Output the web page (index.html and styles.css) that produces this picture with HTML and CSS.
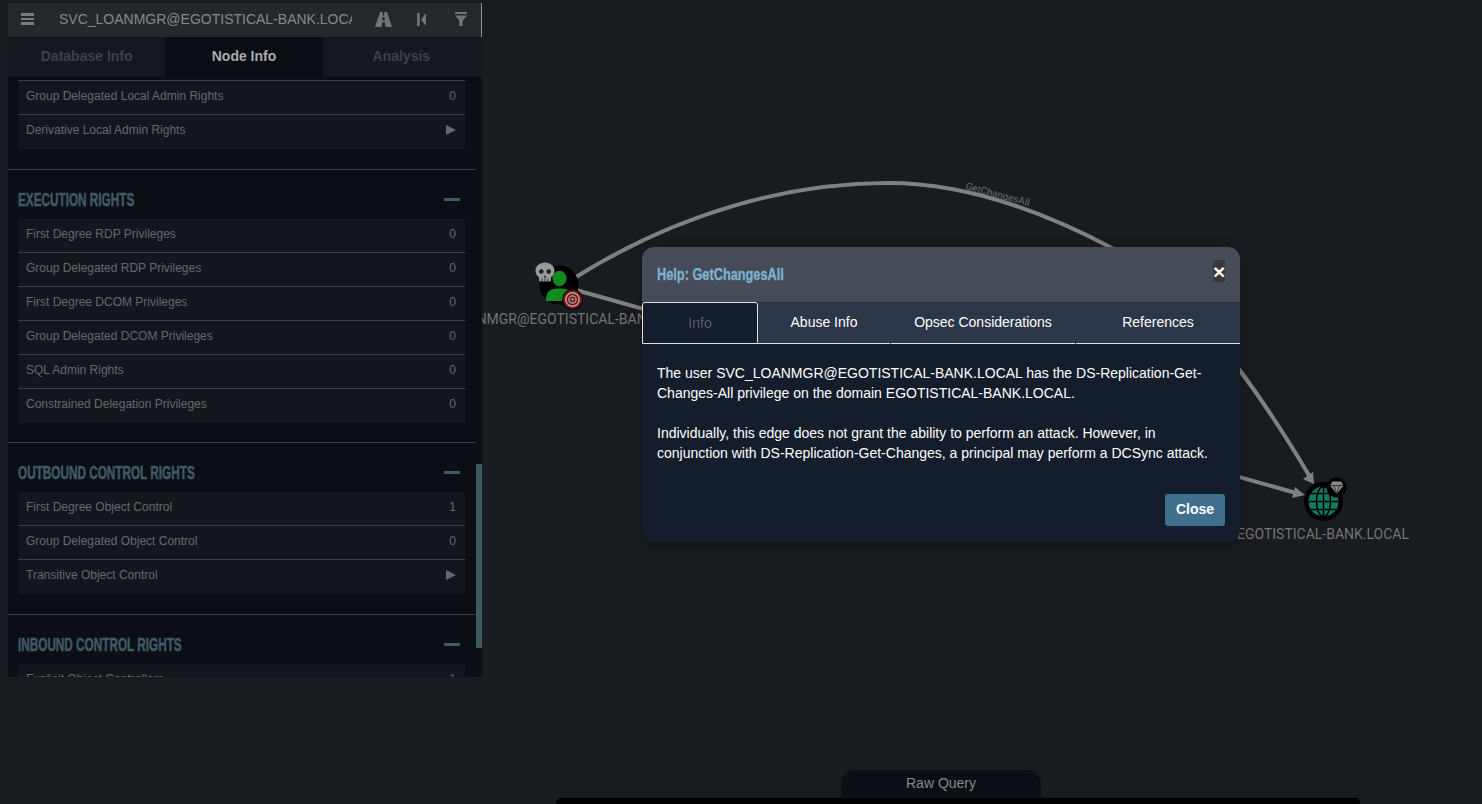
FILE: index.html
```html
<!DOCTYPE html>
<html lang="en">
<head>
<meta charset="utf-8">
<title>BloodHound</title>
<link rel="stylesheet" href="styles.css">
</head>
<body>
<svg class="graph" width="1482" height="804" viewBox="0 0 1482 804">
  <path class="edge" d="M576 277 C 680 212 790 183 888 183 C 965 183 1040 210 1110 247 C 1180 284 1250 375 1310 477"/>
  <path class="edge" d="M576 290 L 1296 493"/>
  <polygon class="arrow" points="1314,484 1303,479 1313,472"/>
  <polygon class="arrow" points="1305,495 1292,498 1295,487"/>
  <text class="edge-label" transform="translate(965 189) rotate(15)">GetChangesAll</text>

  <text class="node-label" x="560" y="324">SVC_LOANMGR@EGOTISTICAL-BANK.LOCAL</text>
  <text class="node-label" x="1323" y="539">EGOTISTICAL-BANK.LOCAL</text>

  <circle cx="559" cy="285" r="19.5" fill="#000"/>
  <ellipse cx="559.500" cy="278.500" rx="7" ry="7.800" fill="#128a1e"/>
  <path d="M546 301 v-3 a9.500 9.500 0 0 1 9.500 -9.500 h8 a9.500 9.500 0 0 1 9.500 9.500 v3 z" fill="#128a1e"/>
  <circle cx="572.500" cy="299.500" r="10.500" fill="#000"/>
  <circle cx="572.500" cy="299.500" r="9.500" fill="#7d0f12"/>
  <circle cx="572.500" cy="299.500" r="6.700" fill="none" stroke="#a8a8a8" stroke-width="1.500"/>
  <circle cx="572.500" cy="299.500" r="3.600" fill="none" stroke="#a8a8a8" stroke-width="1.300"/>
  <circle cx="572.500" cy="299.500" r="1.200" fill="#a8a8a8"/>
  <path d="M545 262.500 c-5.500 0 -9.500 3.600 -9.500 8.300 c0 2.800 1.300 5 3.500 6.400 v3.300 a1 1 0 0 0 1 1 h10 a1 1 0 0 0 1 -1 v-3.300 c2.200 -1.400 3.500 -3.600 3.500 -6.400 c0 -4.700 -4 -8.300 -9.500 -8.300 z" fill="#9a9a9a"/>
  <circle cx="541.300" cy="271.500" r="2.300" fill="#181b20"/>
  <circle cx="548.700" cy="271.500" r="2.300" fill="#181b20"/>
  <path d="M545 275 l1.300 2.500 h-2.600 z" fill="#181b20"/>
  <path d="M542 278.500 v3 M545 278.500 v3 M548 278.500 v3" stroke="#181b20" stroke-width="0.800"/>

  <circle cx="1323.500" cy="501.500" r="19.500" fill="#000"/>
  <circle cx="1323.500" cy="501.500" r="15" fill="#0f7a60"/>
  <g fill="none" stroke="#000" stroke-width="1.500">
    <ellipse cx="1323.500" cy="501.500" rx="7" ry="15"/>
    <path d="M1308.500 501.500 h30 M1311 493.500 h25 M1311 509.500 h25 M1323.500 486.500 v30"/>
  </g>
  <circle cx="1336.500" cy="487.500" r="10" fill="#000"/>
  <path d="M1332.500 481.500 h8.500 l2.500 4 l-6.700 8.500 l-6.800 -8.500 z" fill="#8a8a8a"/>
  <path d="M1330 485.500 h13.500 M1334 485.500 l2.700 8 l2.700 -8" fill="none" stroke="#000" stroke-width="0.600"/>
</svg>

<aside class="panel">
  <div class="topbar">
    <span class="hamburger"><i></i><i></i><i></i></span>
    <span class="search">SVC_LOANMGR@EGOTISTICAL-BANK.LOCAL</span>
    <svg class="tool road" viewBox="0 0 17 15" width="17" height="15"><path fill-rule="evenodd" d="M5 0 h2.800 v3.500 h1.400 v-3.500 H12 L17 15 H10.500 L10 10.500 H7 L6.500 15 H0 z M7.500 5 L7.200 8.500 h2.600 L9.500 5 z"/></svg>
    <svg class="tool back" viewBox="0 0 9 13" width="9" height="13"><path d="M0 0 h2.700 v13 H0 z M9 0 v13 L4 6.500 z"/></svg>
    <svg class="tool filter" viewBox="0 0 12 14" width="12" height="14"><path d="M0 0 h12 v2 H0 z M0 3.500 h12 L7.700 8.500 V14 H4.300 V8.500 z"/></svg>
  </div>
  <nav class="tabs">
    <span class="tab">Database Info</span>
    <span class="tab tab-active">Node Info</span>
    <span class="tab">Analysis</span>
  </nav>
  <div class="scroll">
    <div class="bar"></div>
    <div class="content">
      <section class="section first">
        <div class="rows">
          <div class="row"><span>Group Delegated Local Admin Rights</span><span>0</span></div>
          <div class="row"><span>Derivative Local Admin Rights</span><span class="play"></span></div>
        </div>
      </section>
      <section class="section tight">
        <header class="heading"><h2>EXECUTION RIGHTS</h2><span class="minus"></span></header>
        <div class="rows">
          <div class="row"><span>First Degree RDP Privileges</span><span>0</span></div>
          <div class="row"><span>Group Delegated RDP Privileges</span><span>0</span></div>
          <div class="row"><span>First Degree DCOM Privileges</span><span>0</span></div>
          <div class="row"><span>Group Delegated DCOM Privileges</span><span>0</span></div>
          <div class="row"><span>SQL Admin Rights</span><span>0</span></div>
          <div class="row"><span>Constrained Delegation Privileges</span><span>0</span></div>
        </div>
      </section>
      <section class="section">
        <header class="heading"><h2>OUTBOUND CONTROL RIGHTS</h2><span class="minus"></span></header>
        <div class="rows">
          <div class="row"><span>First Degree Object Control</span><span>1</span></div>
          <div class="row"><span>Group Delegated Object Control</span><span>0</span></div>
          <div class="row"><span>Transitive Object Control</span><span class="play"></span></div>
        </div>
      </section>
      <section class="section">
        <header class="heading"><h2>INBOUND CONTROL RIGHTS</h2><span class="minus"></span></header>
        <div class="rows">
          <div class="row"><span>Explicit Object Controllers</span><span>1</span></div>
        </div>
      </section>
    </div>
  </div>
</aside>

<div class="modal" role="dialog">
  <header class="modal-head">
    <h1>Help: GetChangesAll</h1>
    <button class="x">×</button>
  </header>
  <div class="modal-tabs">
    <span class="mtab mtab-active">Info</span>
    <span class="mtab">Abuse Info</span>
    <span class="mtab">Opsec Considerations</span>
    <span class="mtab">References</span>
  </div>
  <div class="modal-body">
    <p>The user SVC_LOANMGR@EGOTISTICAL-BANK.LOCAL has the DS-Replication-Get-Changes-All privilege on the domain EGOTISTICAL-BANK.LOCAL.</p>
    <p>Individually, this edge does not grant the ability to perform an attack. However, in conjunction with DS-Replication-Get-Changes, a principal may perform a DCSync attack.</p>
  </div>
  <footer class="modal-foot"><button class="close">Close</button></footer>
</div>

<div class="raw">Raw Query</div>
<div class="raw-bar"></div>
</body>
</html>
```
FILE: styles.css
```css
* { box-sizing: border-box; }
html, body { height: 100%; }
body {
  margin: 0;
  background: #181b20;
  font-family: "Liberation Sans", Arial, sans-serif;
  overflow: hidden;
}
.graph { position: absolute; left: 0; top: 0; display: block; }
.edge { fill: none; stroke: #808080; stroke-width: 4; }
.arrow { fill: #808080; }
.edge-label { font: 10px "Roboto", sans-serif; fill: #6c6c6c; }
.node-label { font: 14px "Roboto", sans-serif; fill: #747474; text-anchor: middle; }

.panel {
  position: absolute;
  left: 8px;
  top: 3px;
  width: 474px;
  height: 674px;
  display: flex;
  flex-direction: column;
  background: #0b0f15;
}
.topbar {
  height: 34px;
  flex: none;
  display: flex;
  align-items: center;
  padding-bottom: 2px;
  background: #24282d;
  border-right: 1px solid #8d8f91;
}
.hamburger { width: 13px; margin-left: 13px; display: flex; flex-direction: column; gap: 2px; }
.hamburger i { display: block; height: 2.500px; background: #7a7d80; }
.search {
  margin-left: 25px;
  width: 293px;
  overflow: hidden;
  white-space: nowrap;
  font-size: 14px;
  color: #85888b;
}
.tool { fill: #717477; flex: none; }
.road { margin-left: 23px; }
.back { margin-left: 25px; }
.filter { margin-left: 29px; }

.tabs { height: 40px; flex: none; display: flex; background: #14181f; padding-right: 2px; }
.tab {
  flex: 1;
  display: flex;
  align-items: center;
  justify-content: center;
  padding-bottom: 2px;
  font-size: 14px;
  font-weight: bold;
  color: #3d4248;
}
.tab-active { background: #0a0e14; color: #a9abad; }

.scroll { flex: 1; position: relative; overflow: hidden; }
.bar {
  position: absolute;
  right: 0;
  top: 387px;
  width: 6px;
  height: 184px;
  background: #3d5a60;
}
.content { width: 468px; padding-top: 3px; }
.section { padding-bottom: 20px; border-bottom: 1px solid #3c3f43; }
.tight { padding-bottom: 19px; }
.heading {
  height: 49px;
  display: flex;
  align-items: center;
  justify-content: space-between;
  padding: 11px 16px 0 10px;
}
.heading h2 {
  margin: 0;
  font-size: 18px;
  font-weight: bold;
  color: #3f5a69;
  white-space: nowrap;
  -webkit-text-stroke: 0.5px #3f5a69;
  transform: scaleX(.653);
  transform-origin: left center;
}
.minus { width: 16px; height: 3px; margin-bottom: 2px; background: #3f5a69; }
.rows { margin: 0 11px 0 10px; background: #13171d; }
.row {
  height: 34px;
  display: flex;
  align-items: center;
  justify-content: space-between;
  padding: 0 9px 3px 8px;
  font-size: 12px;
  color: #65696d;
  border-bottom: 1px solid #3c3f43;
}
.row:last-child { border-bottom-color: transparent; }
.first .row:first-child { border-top: 1px solid #3c3f43; height: 35px; }
.play {
  width: 0;
  height: 0;
  border-left: 10px solid #65696d;
  border-top: 5.500px solid transparent;
  border-bottom: 5.500px solid transparent;
}

.modal {
  position: absolute;
  left: 642px;
  top: 247px;
  width: 598px;
  height: 295px;
  display: flex;
  flex-direction: column;
  background: #141d2b;
  border-radius: 12px;
  overflow: hidden;
  box-shadow: 0 4px 14px rgba(0, 0, 0, .3);
  color: #fff;
}
.modal-head {
  height: 55px;
  flex: none;
  display: flex;
  justify-content: space-between;
  align-items: flex-start;
  padding: 13px 15px 0;
  background: #454c57;
}
.modal-head h1 {
  margin: 5px 0 0;
  font-size: 17px;
  font-weight: bold;
  color: #7fb0cd;
  white-space: nowrap;
  -webkit-text-stroke: 0.4px #7fb0cd;
  transform: scaleX(.75);
  transform-origin: left center;
}
.x {
  width: 12px;
  height: 22px;
  padding: 0;
  border: 0;
  background: #3a3838;
  color: #fff;
  font: bold 21px/21px "Liberation Sans", sans-serif;
}
.modal-tabs {
  height: 42px;
  flex: none;
  display: grid;
  grid-template-columns: 116px 133px 185px 164px;
  background: #2b3648;
  font-size: 14px;
}
.mtab {
  display: flex;
  align-items: center;
  justify-content: center;
  margin-right: 1px;
  padding-bottom: 1px;
  border-bottom: 1px solid #dfe2e5;
}
.mtab:last-child { margin-right: 0; }
.mtab-active {
  margin-right: 0;
  background: #141d2b;
  color: #555b63;
  border: 1px solid #dfe2e5;
  border-radius: 3px 3px 0 0;
}
.modal-body { flex: 1; padding: 19px 15px 0; font-size: 14px; line-height: 20px; }
.modal-body p { margin: 0 0 20px; }
.modal-foot { flex: none; display: flex; justify-content: flex-end; padding: 0 15px 16px; }
.close {
  width: 60px;
  height: 32px;
  padding: 0 0 2px;
  border: 0;
  border-radius: 3px;
  background: #41708f;
  color: #fff;
  font: bold 14px "Liberation Sans", sans-serif;
}

.raw {
  position: absolute;
  left: 841px;
  top: 770px;
  width: 200px;
  height: 30px;
  display: flex;
  align-items: center;
  justify-content: center;
  padding-bottom: 4px;
  background: #0b0f15;
  border-radius: 14px 14px 0 0;
  color: #85888b;
  font-size: 14px;
}
.raw-bar {
  position: absolute;
  left: 556px;
  top: 798px;
  width: 804px;
  height: 6px;
  background: #000;
  border-radius: 5px 5px 0 0;
}
```
